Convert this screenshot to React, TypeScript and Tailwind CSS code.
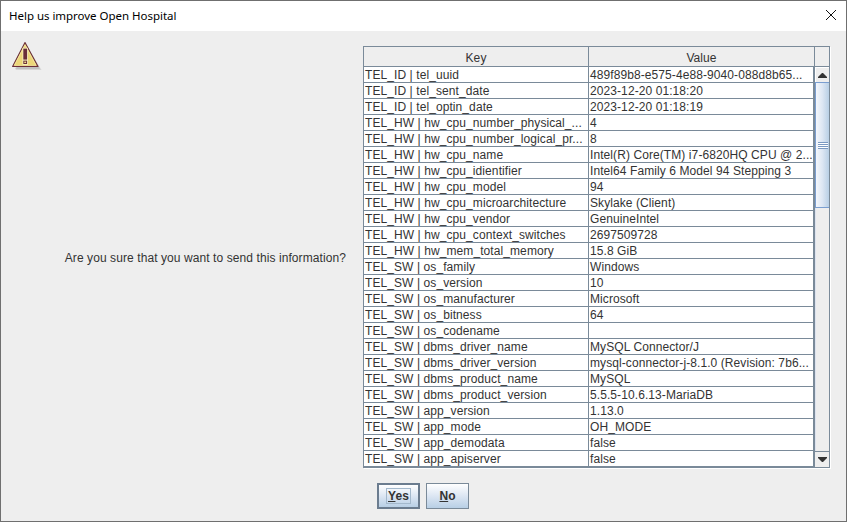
const rows: [string, string][] = [
  ["TEL_ID | tel_uuid", "489f89b8-e575-4e88-9040-088d8b65..."],
  ["TEL_ID | tel_sent_date", "2023-12-20 01:18:20"],
  ["TEL_ID | tel_optin_date", "2023-12-20 01:18:19"],
  ["TEL_HW | hw_cpu_number_physical_...", "4"],
  ["TEL_HW | hw_cpu_number_logical_pr...", "8"],
  ["TEL_HW | hw_cpu_name", "Intel(R) Core(TM) i7-6820HQ CPU @ 2..."],
  ["TEL_HW | hw_cpu_idientifier", "Intel64 Family 6 Model 94 Stepping 3"],
  ["TEL_HW | hw_cpu_model", "94"],
  ["TEL_HW | hw_cpu_microarchitecture", "Skylake (Client)"],
  ["TEL_HW | hw_cpu_vendor", "GenuineIntel"],
  ["TEL_HW | hw_cpu_context_switches", "2697509728"],
  ["TEL_HW | hw_mem_total_memory", "15.8 GiB"],
  ["TEL_SW | os_family", "Windows"],
  ["TEL_SW | os_version", "10"],
  ["TEL_SW | os_manufacturer", "Microsoft"],
  ["TEL_SW | os_bitness", "64"],
  ["TEL_SW | os_codename", ""],
  ["TEL_SW | dbms_driver_name", "MySQL Connector/J"],
  ["TEL_SW | dbms_driver_version", "mysql-connector-j-8.1.0 (Revision: 7b6..."],
  ["TEL_SW | dbms_product_name", "MySQL"],
  ["TEL_SW | dbms_product_version", "5.5.5-10.6.13-MariaDB"],
  ["TEL_SW | app_version", "1.13.0"],
  ["TEL_SW | app_mode", "OH_MODE"],
  ["TEL_SW | app_demodata", "false"],
  ["TEL_SW | app_apiserver", "false"],
];

function Warning() {
  return (
    <svg width="31" height="30" viewBox="0 0 31 30" className="block">
      <path d="M15 4 L29.5 28 L3.5 28 Z" fill="#8f8f8f" opacity="0.25" />
      <path d="M14.5 3 L28 27 L3 27 Z" fill="#8f8f8f" opacity="0.3" />
      <path d="M13 0.6 L26 24.4 L0.6 24.4 Z" fill="#ecd678" stroke="#6a2f3a" strokeWidth="1.1" strokeLinejoin="round" />
      <path d="M13 3 L24 23.4 L2.4 23.4 Z" fill="none" stroke="#f4e6a0" strokeWidth="0.8" />
      <rect x="10.5" y="5.8" width="5.4" height="17" fill="#fbf3c4" />
      <rect x="11.3" y="6.6" width="3.8" height="11" fill="#6a2f3a" />
      <rect x="11.3" y="18.6" width="3.8" height="3.4" fill="#6a2f3a" />
      <rect x="12.3" y="19.6" width="1.8" height="1.4" fill="#f0dd8a" />
    </svg>
  );
}

export default function App() {
  return (
    <div className="w-[847px] h-[522px] bg-[#eeeeee] border-l border-r border-b border-[#6f6f6f] flex flex-col overflow-hidden font-['Liberation_Sans',Arial,sans-serif] text-[12px] text-[#333333] tracking-[0.085px]">
      <div className="h-[31px] shrink-0 bg-white flex items-center justify-between pl-[8px] pr-[9px] border-t border-[#6f6f6f] font-['Noto_Sans',sans-serif] text-[11.5px] tracking-[-0.03px] text-[#000000]">
        <span>Help us improve Open Hospital</span>
        <svg width="12" height="12" viewBox="0 0 12 12" className="mb-[2px]">
          <path d="M1 1 L11 11 M11 1 L1 11" stroke="#111111" strokeWidth="1" fill="none" />
        </svg>
      </div>
      <div className="flex-1 flex flex-col pt-[15px] pl-[11px] pr-[16px]">
        <div className="flex items-stretch h-[422px]">
          <div className="w-[31px] shrink-0 -mt-[4px]">
            <Warning />
          </div>
          <div className="w-[320px] shrink-0 flex items-center justify-end pr-[17px] pt-[2px]">
            <span>Are you sure that you want to send this information?</span>
          </div>
          <div className="w-[467px] border border-[#7a8a99] shadow-[1px_1px_0_#ffffff] flex flex-col">
            <div className="flex h-[20px] shrink-0 bg-[#eeeeee] border-b border-[#7a8a99]">
              <div className="w-[225px] border-r border-[#7a8a99] flex items-center justify-center pt-[2px]">Key</div>
              <div className="w-[226px] flex items-center justify-center pt-[2px] border-r border-[#7a8a99]">Value</div>
            </div>
            <div className="flex-1 flex min-h-0">
              <div className="w-[451px] bg-white border-r-[2px] border-[#7a8a99] overflow-hidden">
                {rows.map(([k, v]) => (
                  <div key={k} className="flex h-[16px] border-b border-[#7a8a99] leading-[17px] whitespace-nowrap">
                    <div className="w-[225px] pl-[1px] border-r border-[#7a8a99] overflow-hidden">{k}</div>
                    <div className="flex-1 pl-[1px] overflow-hidden">{v}</div>
                  </div>
                ))}
              </div>
              <div className="w-[14px] flex flex-col bg-[#eeeeee]">
                <div className="h-[15px] shrink-0 flex items-center justify-center border-t border-l border-white">
                  <svg width="9" height="5" viewBox="0 0 9 5"><path d="M4 0 H5 L9 4 V5 H0 V4 Z" fill="#333333" /></svg>
                </div>
                <div className="h-[126px] shrink-0 flex items-center justify-center border-t border-b border-l border-[#7a9ed0] bg-gradient-to-r from-[#f4f7fc] via-[#dce6f3] to-[#b8cfe5]">
                  <div className="w-[10px] h-[7px] bg-[repeating-linear-gradient(to_bottom,#7a99c2_0,#7a99c2_1px,#ffffff_1px,#ffffff_2px)]" />
                </div>
                <div className="flex-1 border-l border-[#dde3ef]" />
                <div className="h-[16px] shrink-0 flex items-center justify-center border-t border-[#7a8a99]">
                  <svg width="9" height="5" viewBox="0 0 9 5"><path d="M0 0 H9 V1 L5 5 H4 L0 1 Z" fill="#333333" /></svg>
                </div>
              </div>
            </div>
          </div>
        </div>
        <div className="flex justify-start gap-[6px] ml-[365px] mt-[15px]">
          <button className="w-[43px] h-[26px] border-[2px] border-[#6b7c8f] bg-gradient-to-b from-[#ffffff] via-[#dce6f3] to-[#b8cfe5] font-bold text-[12px] text-[#333333] flex items-center justify-center">
            <span className="border border-[#a3b8cc] px-[1px] leading-[14px]"><span className="underline">Y</span>es</span>
          </button>
          <button className="w-[43px] h-[26px] border border-[#7a8a99] bg-gradient-to-b from-[#ffffff] via-[#dce6f3] to-[#b8cfe5] font-bold text-[12px] text-[#333333]">
            <span className="underline">N</span>o
          </button>
        </div>
      </div>
    </div>
  );
}
